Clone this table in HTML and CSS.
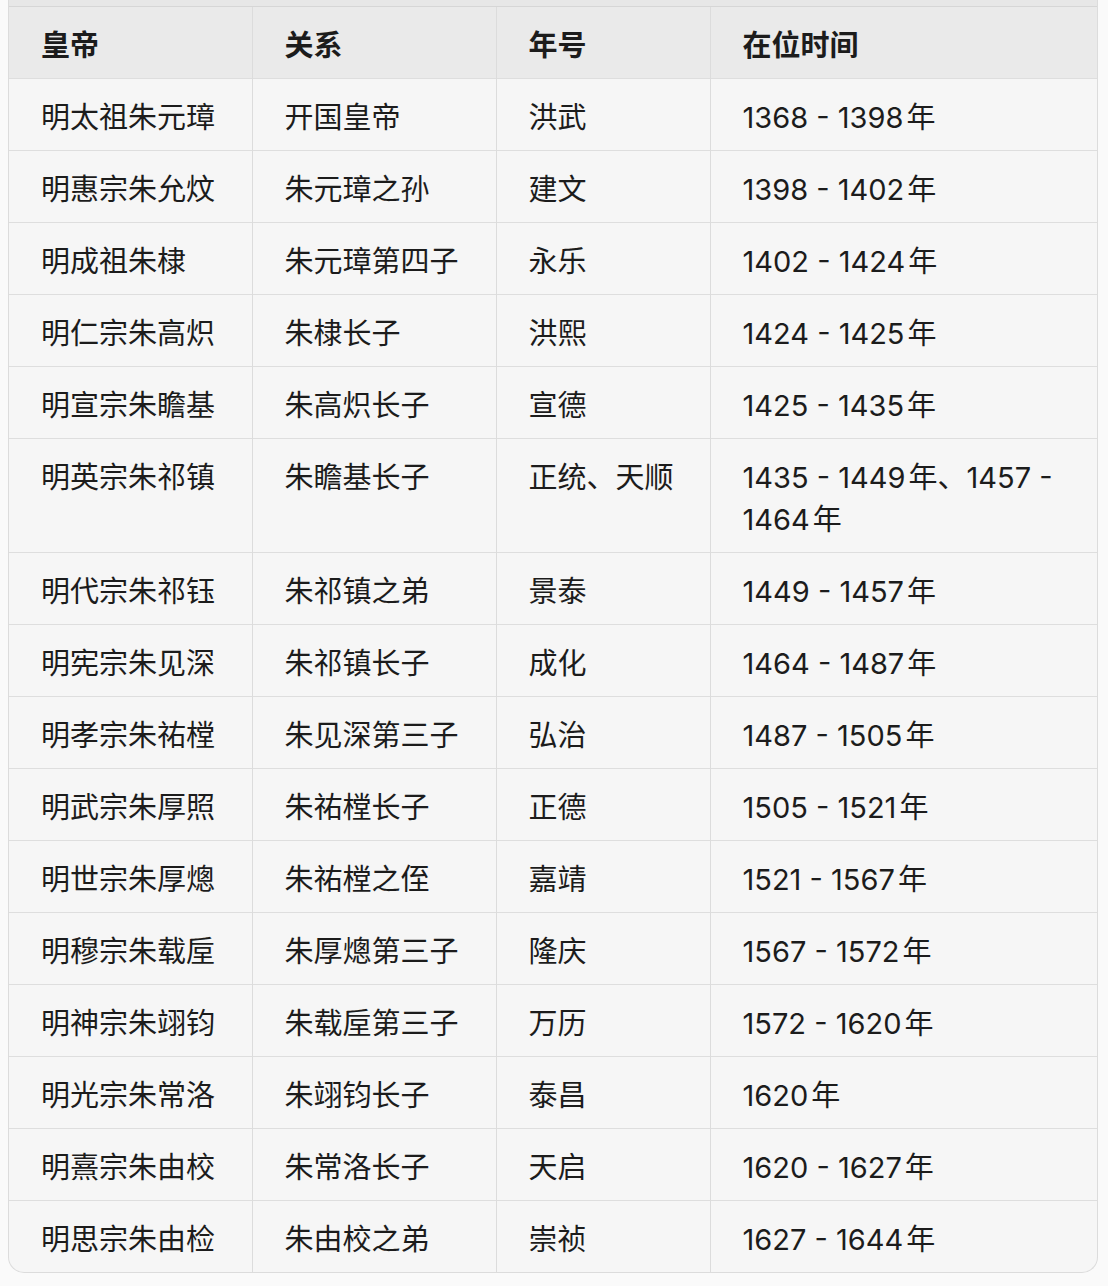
FILE: index.html
```html
<!DOCTYPE html>
<html lang="zh">
<head>
<meta charset="utf-8">
<link rel="stylesheet" href="styles.css">
</head>
<body>
<div class="card">
  <div class="cap"></div>
  <table class="emperors">
    <colgroup>
      <col class="c1"><col class="c2"><col class="c3"><col class="c4">
    </colgroup>
    <thead>
      <tr><th>皇帝</th><th>关系</th><th>年号</th><th>在位时间</th></tr>
    </thead>
    <tbody>
      <tr><td>明太祖朱元璋</td><td>开国皇帝</td><td>洪武</td><td class="years">1368 - 1398<span class="yr">年</span></td></tr>
      <tr><td>明惠宗朱允炆</td><td>朱元璋之孙</td><td>建文</td><td class="years">1398 - 1402<span class="yr">年</span></td></tr>
      <tr><td>明成祖朱棣</td><td>朱元璋第四子</td><td>永乐</td><td class="years">1402 - 1424<span class="yr">年</span></td></tr>
      <tr><td>明仁宗朱高炽</td><td>朱棣长子</td><td>洪熙</td><td class="years">1424 - 1425<span class="yr">年</span></td></tr>
      <tr><td>明宣宗朱瞻基</td><td>朱高炽长子</td><td>宣德</td><td class="years">1425 - 1435<span class="yr">年</span></td></tr>
      <tr><td>明英宗朱祁镇</td><td>朱瞻基长子</td><td>正统、天顺</td><td class="years">1435 - 1449<span class="yr">年、</span>1457 - 1464<span class="yr">年</span></td></tr>
      <tr><td>明代宗朱祁钰</td><td>朱祁镇之弟</td><td>景泰</td><td class="years">1449 - 1457<span class="yr">年</span></td></tr>
      <tr><td>明宪宗朱见深</td><td>朱祁镇长子</td><td>成化</td><td class="years">1464 - 1487<span class="yr">年</span></td></tr>
      <tr><td>明孝宗朱祐樘</td><td>朱见深第三子</td><td>弘治</td><td class="years">1487 - 1505<span class="yr">年</span></td></tr>
      <tr><td>明武宗朱厚照</td><td>朱祐樘长子</td><td>正德</td><td class="years">1505 - 1521<span class="yr">年</span></td></tr>
      <tr><td>明世宗朱厚熜</td><td>朱祐樘之侄</td><td>嘉靖</td><td class="years">1521 - 1567<span class="yr">年</span></td></tr>
      <tr><td>明穆宗朱载垕</td><td>朱厚熜第三子</td><td>隆庆</td><td class="years">1567 - 1572<span class="yr">年</span></td></tr>
      <tr><td>明神宗朱翊钧</td><td>朱载垕第三子</td><td>万历</td><td class="years">1572 - 1620<span class="yr">年</span></td></tr>
      <tr><td>明光宗朱常洛</td><td>朱翊钧长子</td><td>泰昌</td><td class="years">1620<span class="yr">年</span></td></tr>
      <tr><td>明熹宗朱由校</td><td>朱常洛长子</td><td>天启</td><td class="years">1620 - 1627<span class="yr">年</span></td></tr>
      <tr><td>明思宗朱由检</td><td>朱由校之弟</td><td>崇祯</td><td class="years">1627 - 1644<span class="yr">年</span></td></tr>
    </tbody>
  </table>
</div>
</body>
</html>
```
FILE: styles.css
```css
html, body {
  margin: 0;
  padding: 0;
  background: #fafafa;
}
body {
  font-family: "Noto Sans CJK SC", "Noto Sans", sans-serif;
  color: #1c1c1c;
  padding: 0 10px 12px 8px;
}
.card {
  box-sizing: border-box;
  width: 1090px;
  border: 1px solid #dcdcdc;
  border-top: none;
  border-radius: 0 0 16px 16px;
  overflow: hidden;
  background: #f6f6f6;
}
.cap {
  height: 6px;
  background: #e7e7e7;
  border-bottom: 1px solid #d6d6d6;
}
.emperors {
  width: 100%;
  border-collapse: collapse;
  table-layout: fixed;
  font-size: 29px;
  line-height: 42px;
}
.c1 { width: 243px; }
.c2 { width: 244px; }
.c3 { width: 214px; }
.c4 { width: 387px; }
.emperors th,
.emperors td {
  text-align: left;
  vertical-align: top;
  padding: 15px 28px 14px 32px;
  border-left: 1px solid #dcdcdc;
  border-top: 1px solid #dedede;
}
.emperors th:first-child,
.emperors td:first-child {
  border-left: none;
}
.emperors thead th {
  border-top: none;
  background: #eaeaea;
  font-weight: 700;
}
.emperors tbody td {
  font-weight: 400;
}
.emperors td.years {
  font-family: "Inter", "Noto Sans CJK SC", sans-serif;
  padding-top: 18px;
  padding-bottom: 11px;
}
.yr {
  font-family: "Noto Sans CJK SC", sans-serif;
  line-height: 1;
  margin-left: 3px;
}
```
